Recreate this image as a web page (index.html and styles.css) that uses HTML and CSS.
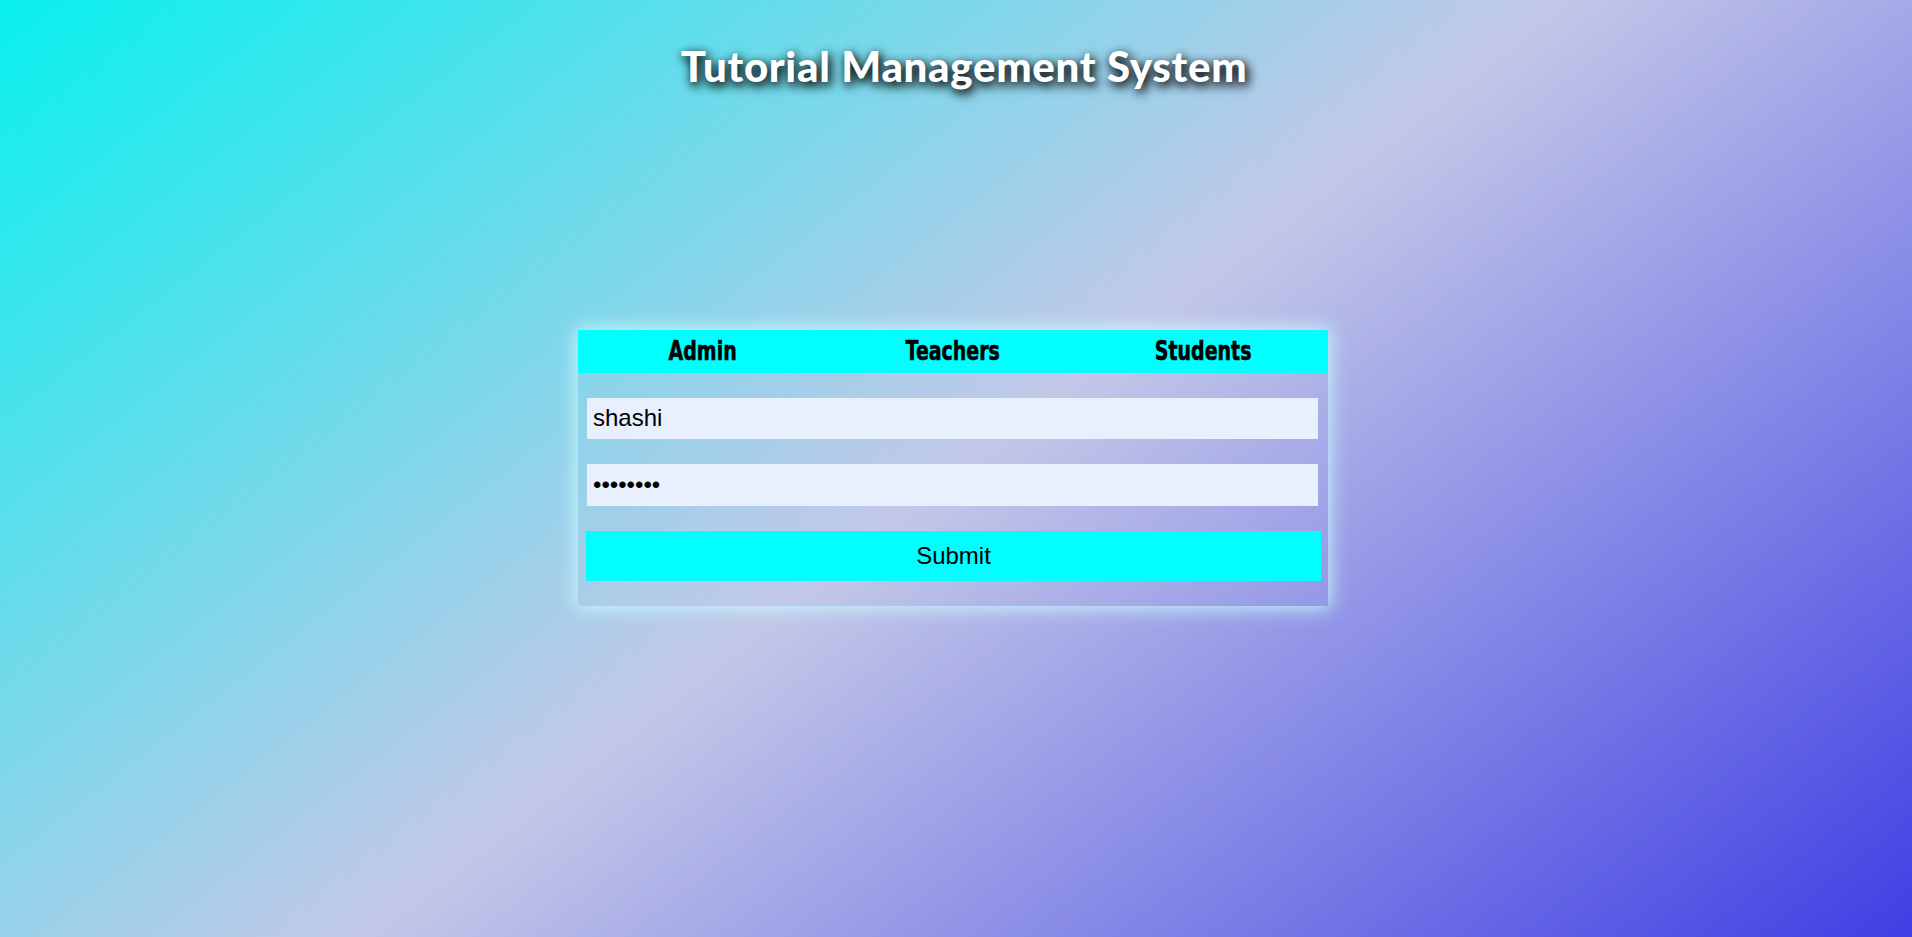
FILE: index.html
```html
<!DOCTYPE html>
<html lang="en">
<head>
<meta charset="utf-8">
<title>Tutorial Management System</title>
<link rel="stylesheet" href="styles.css">
</head>
<body>
  <div class="page">
    <header class="top">
      <h1 class="title">Tutorial Management System</h1>
    </header>
    <div class="card">
      <nav class="tabs">
        <a class="tab" href="#"><span class="tab-label">Admin</span></a>
        <a class="tab" href="#"><span class="tab-label">Teachers</span></a>
        <a class="tab" href="#"><span class="tab-label">Students</span></a>
      </nav>
      <form class="form">
        <input class="field" type="text" value="shashi">
        <input class="field" type="password" value="12345678">
        <button class="submit" type="button">Submit</button>
      </form>
    </div>
    <div class="bottom"></div>
  </div>
</body>
</html>
```
FILE: styles.css
```css
html, body {
  margin: 0;
  padding: 0;
  height: 100%;
}

body {
  background: linear-gradient(142deg, #08f0ee 0%, #c3c8e8 50%, #3f3fe4 100%);
  background-attachment: fixed;
  font-family: "Liberation Sans", Arial, sans-serif;
  overflow: hidden;
}

.page {
  height: 100vh;
  display: grid;
  grid-template-rows: 1fr auto 1fr;
  justify-items: center;
}

.top {
  align-self: start;
  padding-top: 42px;
  margin-left: 16px;
}

.title {
  margin: 0;
  font-family: "Comic Sans MS", "Lato", "DejaVu Sans", sans-serif;
  font-weight: 900;
  font-size: 42px;
  line-height: 48px;
  color: #ffffff;
  letter-spacing: 0.7px;
  text-shadow: 3px 4px 12px rgba(0, 0, 0, 1), 1px 3px 8px rgba(0, 0, 0, 0.6);
}

.card {
  width: 750px;
  margin-left: -6px;
  margin-top: -2px;
  box-shadow: 0 0 18px 2px rgba(200, 250, 255, 0.95);
}

.tabs {
  display: grid;
  grid-template-columns: 1fr 1fr 1fr;
  height: 43px;
  align-items: center;
  background: #00ffff;
}

.tab {
  text-align: center;
  color: #000;
  text-decoration: none;
  font-family: Impact, "DejaVu Sans", sans-serif;
  font-weight: bold;
  font-size: 26px;
  line-height: 43px;
}

.tab-label {
  display: inline-block;
  transform: scaleX(0.73);
  -webkit-text-stroke: 0.6px #000;
}

.form {
  display: flex;
  flex-direction: column;
  align-items: flex-start;
  gap: 25px;
  padding: 25px 7px 25px 8px;
}

.field {
  box-sizing: border-box;
  width: 731px;
  height: 41px;
  margin: 0 0 0 1px;
  border: none;
  outline: none;
  padding: 0 6px;
  background: #e8f0fe;
  color: #000;
  font-family: "Liberation Sans", Arial, sans-serif;
  font-size: 24px;
}

.field + .field {
  height: 42px;
}

.submit {
  width: 735px;
  height: 50px;
  border: none;
  padding: 0;
  background: #00ffff;
  color: #000;
  font-family: "Liberation Sans", Arial, sans-serif;
  font-size: 24px;
}
```
